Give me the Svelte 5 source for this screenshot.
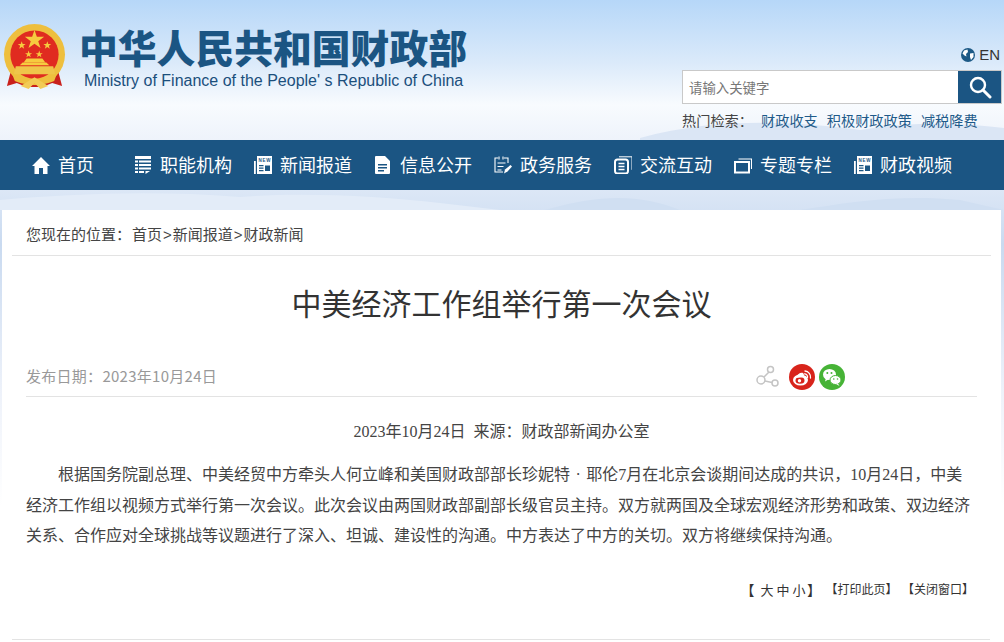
<script>
  const nav = [
    { label: '职能机构', icon: 'list' },
    { label: '新闻报道', icon: 'news' },
    { label: '信息公开', icon: 'doc' },
    { label: '政务服务', icon: 'pen' },
    { label: '交流互动', icon: 'talk' },
    { label: '专题专栏', icon: 'win' },
    { label: '财政视频', icon: 'news' }
  ];
</script>

<div class="page">
  <svg class="sky" viewBox="0 0 1004 642" preserveAspectRatio="none" aria-hidden="true">
    <defs>
      <linearGradient id="skyg" x1="0" y1="0" x2="0" y2="1">
        <stop offset="0" stop-color="#b6d7f8" />
        <stop offset="0.45" stop-color="#dbeafa" />
        <stop offset="0.75" stop-color="#f8fbfe" />
        <stop offset="1" stop-color="#eef3fb" />
      </linearGradient>
      <linearGradient id="lowg" x1="0" y1="0" x2="0" y2="1">
        <stop offset="0" stop-color="#dce7f6" />
        <stop offset="0.12" stop-color="#c9daf0" />
        <stop offset="0.45" stop-color="#eef2fa" />
        <stop offset="0.7" stop-color="#ffffff" />
      </linearGradient>
    </defs>
    <rect width="1004" height="140" fill="url(#skyg)" />
    <rect y="190" width="1004" height="452" fill="url(#lowg)" />
    <path d="M0 200 C70 194 150 190 240 197 C300 192 380 196 440 203 L500 210 L0 210Z" fill="#e3ecf8" />
    <path d="M545 210 C600 194 640 194 680 210Z" fill="#d0dff2" />
    <path d="M800 210 C850 202 900 194 960 200 L1004 210Z" fill="#d0dff2" />
    <path d="M640 138 C720 116 800 122 860 130 C920 120 970 124 1004 128 L1004 140 L640 140Z" fill="#dbe6f5" />
  </svg>

  <header class="top">
    <div class="brand">
      <svg class="emblem" viewBox="0 0 64 66" aria-hidden="true">
        <path d="M9 44 L4 63 L14 60 L24 64 L40 64 L50 60 L60 63 L55 44Z" fill="#c9211c" />
        <circle cx="32" cy="31" r="31" fill="#eebf3e" />
        <circle cx="32" cy="31" r="24.5" fill="#e02b20" />
        <path d="M32 6 l2.4 7 7.4 0 -6 4.4 2.3 7 -6.1 -4.3 -6.1 4.3 2.3 -7 -6 -4.4 7.4 0Z" fill="#f6cb3f" />
        <g fill="#f6cb3f">
          <path d="M19 17.5l1 2.9 3 0-2.4 1.8 .9 2.9-2.5-1.8-2.5 1.8 .9-2.9-2.4-1.8 3 0Z" />
          <path d="M45 17.5l1 2.9 3 0-2.4 1.8 .9 2.9-2.5-1.8-2.5 1.8 .9-2.9-2.4-1.8 3 0Z" />
          <path d="M26 27l.9 2.6 2.7 0-2.2 1.6 .8 2.6-2.2-1.6-2.2 1.6 .8-2.6-2.2-1.6 2.7 0Z" />
          <path d="M36.800 27l.9 2.6 2.7 0-2.2 1.6 .8 2.6-2.2-1.6-2.2 1.6 .8-2.6-2.2-1.6 2.7 0Z" />
          <path d="M20 39h24l3 3H17Z" />
          <path d="M13 43h38l2 8H11Z" fill="#efc54a" />
          <path d="M24 35h16l3 4H21Z" />
        </g>
        <path d="M9 50 C20 58 44 58 55 50 L52 58 C42 63 22 63 12 58Z" fill="#eebf3e" />
        <path d="M18 63 L32 54 L46 63 L38 66 L32 60 L26 66Z" fill="#f2cb55" />
      </svg>
      <div class="names">
        <div class="cn">中华人民共和国财政部</div>
        <div class="en">Ministry of Finance of the People' s Republic of China</div>
      </div>
    </div>

    <div class="tools">
      <div class="lang">
        <svg class="globe" viewBox="0 0 14 14" aria-hidden="true">
          <circle cx="7" cy="7" r="7" fill="#1d5a86" />
          <path d="M3 2.500 L6.500 1.500 L7 4 L5 6 L5.500 8.500 L3.500 7.500 L1.500 5.500Z M9 5.500 L12.500 5 L12.500 9 L10 12 L9 9Z" fill="#fff" />
        </svg>
        <span>EN</span>
      </div>
      <div class="search">
        <span class="ph">请输入关键字</span>
        <span class="btn">
          <svg viewBox="0 0 24 24" width="24" height="24" aria-hidden="true">
            <circle cx="10" cy="10" r="7" fill="none" stroke="#fff" stroke-width="2.400" />
            <path d="M15 15 L22 22" stroke="#fff" stroke-width="3" stroke-linecap="round" />
          </svg>
        </span>
      </div>
      <div class="hot">
        <span class="hot-label">热门检索：</span>
        <span class="k1">财政收支</span>
        <span class="k2">积极财政政策</span>
        <span class="k3">减税降费</span>
      </div>
    </div>
  </header>

  <nav class="nav">
    <a class="item home">
      <svg viewBox="0 0 18 18" aria-hidden="true"><path d="M9 1 L18 10 H15.500 V18 H11 V12 H7 V18 H2.500 V10 H0Z" fill="#fff" /></svg>
      <span>首页</span>
    </a>
    {#each nav as n}
      <a class="item">
        <svg viewBox="0 0 18 18" aria-hidden="true">
          {#if n.icon === 'list'}
            <path d="M1 0h16v3H1Z M1 4.500h3v2H1Z M5 4.500h12v2H5Z M1 8h3v2H1Z M5 8h12v2H5Z M1 11.500h3v2H1Z M5 11.500h12v2H5Z M1 15h3v2H1Z M5 15h5v2H5Z M11.500 15H16l-4.500 3Z" fill="#fff" />
          {:else if n.icon === 'news'}
            <path fill-rule="evenodd" d="M3 0h15v18H3Z M11 9.500V15h5V9.500Z M5 9v1.300h4.500V9Z M5 11.500v1.300h4.500V11.500Z M5 14v1.300h4.500V14Z" fill="#fff" />
            <text class="new" x="4.500" y="6" textLength="12">NEW</text>
            <path d="M0 5h1.800v13H0Z" fill="#fff" />
          {:else if n.icon === 'doc'}
            <path fill-rule="evenodd" d="M2 0h9l5 5v12a1 1 0 0 1-1 1H2a1 1 0 0 1-1-1V1a1 1 0 0 1 1-1Z M4 8v1.500h9V8Z M4 11v1.500h9V11Z M4 14v1.500h6V14Z" fill="#fff" />
          {:else if n.icon === 'pen'}
            <g fill="none" stroke="#fff" stroke-width="1.100">
              <path d="M4 2H1v14h8 M10 2h4v5" />
              <path d="M5 .5v3 M9 .5v3 M3.500 7h8 M3.500 10.500h6 M3.500 14h4" />
            </g>
            <path d="M10 17.500 L11 13.500 L16.500 9 L18 10.500 L13.500 15.500Z" fill="#fff" />
          {:else if n.icon === 'talk'}
            <g fill="none" stroke="#fff">
              <path d="M5 .8h13v13" stroke-width="1" />
              <rect x="1" y="3.500" width="13" height="14" rx="2.500" stroke-width="2" />
              <path d="M4.500 7.500h6 M4.500 10.500h6 M4.500 13.500h6" stroke-width="1.300" />
            </g>
          {:else}
            <g fill="none" stroke="#fff">
              <rect x="1" y="6" width="14" height="10.500" stroke-width="2" />
              <path d="M4.500 3h13v10" stroke-width="1.100" />
            </g>
          {/if}
        </svg>
        <span>{n.label}</span>
      </a>
    {/each}
  </nav>

  <main class="card">
    <div class="crumb">
      <span class="here">您现在的位置：</span><span class="path">首页</span><span class="sep">&gt;</span><span>新闻报道</span><span class="sep">&gt;</span><span>财政新闻</span>
    </div>
    <div class="article">
      <h1>中美经济工作组举行第一次会议</h1>
      <div class="meta">
        <span class="date">发布日期：2023年10月24日</span>
        <div class="share">
          <svg class="s-share" viewBox="0 0 24 24" aria-hidden="true">
            <g fill="none" stroke="#c4c4c4" stroke-width="1.500">
              <circle cx="14.500" cy="4.500" r="3" />
              <circle cx="5" cy="15" r="4" />
              <circle cx="19" cy="18" r="3" />
              <path d="M13 7 L8 12 M9 16 L16 17.500" />
            </g>
          </svg>
          <span class="round weibo">
            <svg viewBox="0 0 26 26" aria-hidden="true">
              <ellipse cx="11.500" cy="16" rx="7.500" ry="5.500" fill="#fff" />
              <ellipse cx="11" cy="16.500" rx="4.500" ry="3.300" fill="#d8241b" />
              <circle cx="10.500" cy="16.800" r="1.700" fill="#fff" />
              <path d="M16 7 a6 6 0 0 1 5.500 7 M15.500 9.800 a3 3 0 0 1 3 3.500" fill="none" stroke="#fff" stroke-width="1.300" stroke-linecap="round" />
              <path d="M6 14 C8 10 12 8 14 9 C15.500 10 15 12 14 13Z" fill="#fff" />
            </svg>
          </span>
          <span class="round wechat">
            <svg viewBox="0 0 26 26" aria-hidden="true">
              <ellipse cx="10.500" cy="10.500" rx="6.500" ry="5.500" fill="#fff" />
              <path d="M7 14 L6 17.500 L10 15Z" fill="#fff" />
              <ellipse cx="16.500" cy="16" rx="5.500" ry="4.500" fill="#fff" stroke="#46b336" stroke-width="1" />
              <path d="M19 19.500 L20.500 22 L17 20Z" fill="#fff" />
              <circle cx="8.300" cy="9" r="1" fill="#46b336" />
              <circle cx="12.500" cy="9" r="1" fill="#46b336" />
              <circle cx="14.800" cy="15" r=".8" fill="#46b336" />
              <circle cx="18.500" cy="15" r=".8" fill="#46b336" />
            </svg>
          </span>
        </div>
      </div>
      <div class="source">2023年10月24日&nbsp;&nbsp;来源：财政部新闻办公室</div>
      <p>根据国务院副总理、中美经贸中方牵头人何立峰和美国财政部部长珍妮特 · 耶伦7月在北京会谈期间达成的共识，10月24日，中美经济工作组以视频方式举行第一次会议。此次会议由两国财政部副部长级官员主持。双方就两国及全球宏观经济形势和政策、双边经济关系、合作应对全球挑战等议题进行了深入、坦诚、建设性的沟通。中方表达了中方的关切。双方将继续保持沟通。</p>
      <div class="actions">
        <span class="size"><b class="open">【</b><i>大</i><i>中</i><i>小</i><b>】</b></span>
        <span class="act">【打印此页】</span>
        <span class="act">【关闭窗口】</span>
      </div>
    </div>
    <div class="foot-line"></div>
  </main>
</div>

<style>
  :global(body) {
    margin: 0;
    background: #fff;
    font-family: "Noto Sans CJK SC", "Liberation Sans", sans-serif;
  }
  .page {
    position: relative;
    width: 1004px;
    height: 642px;
    overflow: hidden;
  }
  .sky {
    position: absolute;
    inset: 0;
    width: 100%;
    height: 100%;
  }
  .top {
    position: relative;
    height: 140px;
    display: flex;
    justify-content: space-between;
  }
  .brand {
    display: flex;
    align-items: flex-start;
    padding: 23px 0 0 3px;
    gap: 13px;
  }
  .emblem {
    width: 63px;
    height: 67px;
  }
  .names {
    display: flex;
    flex-direction: column;
  }
  .cn {
    font-size: 38.800px;
    font-weight: 900;
    color: #1b5583;
    line-height: 40px;
    white-space: nowrap;
    margin-top: 3px;
  }
  .en {
    font-family: "Liberation Sans", sans-serif;
    font-size: 16px;
    color: #1b4f7c;
    line-height: 18px;
    margin: 6px 0 0 5px;
    white-space: nowrap;
  }
  .tools {
    width: 322px;
    padding-top: 44px;
    display: flex;
    flex-direction: column;
  }
  .lang {
    display: flex;
    justify-content: flex-end;
    align-items: center;
    gap: 4px;
    height: 20px;
    padding-right: 4px;
    font-family: "Liberation Sans", sans-serif;
    font-size: 15px;
    color: #333;
  }
  .globe {
    width: 14px;
    height: 14px;
    margin-top: 2px;
  }
  .search {
    margin-top: 6px;
    width: 320px;
    height: 34px;
    display: flex;
    background: #fff;
    border: 1px solid #c9c9c9;
    box-sizing: border-box;
    align-items: stretch;
  }
  .ph {
    flex: 1;
    padding-left: 6px;
    font-size: 13.400px;
    line-height: 32px;
    color: #777;
  }
  .btn {
    width: 43px;
    background: #1b5583;
    display: flex;
    align-items: center;
    justify-content: center;
  }
  .hot {
    margin-top: 6px;
    font-size: 14.200px;
    line-height: 20px;
    color: #444;
    display: flex;
    white-space: nowrap;
  }
  .hot-label { width: 79px; }
  .k1, .k2, .k3 { color: #1f5b8a; }
  .k2, .k3 { margin-left: 9px; }
  .nav {
    position: relative;
    height: 50px;
    background: #1b5583;
    display: flex;
    padding-left: 32px;
    box-sizing: border-box;
  }
  .item {
    width: 120px;
    display: flex;
    align-items: center;
    gap: 8px;
    color: #fff;
    font-size: 18px;
    white-space: nowrap;
  }
  .item span {
    margin-top: -2px;
  }
  .item.home {
    width: 102px;
  }
  .item svg {
    width: 18px;
    height: 18px;
    flex: none;
  }
  .new {
    font-family: "Liberation Sans", sans-serif;
    font-size: 4.500px;
    font-weight: 700;
    fill: #1b5583;
  }
  .card {
    position: relative;
    margin: 20px 3px 0 2px;
    height: 432px;
    background: #fff;
    display: flex;
    flex-direction: column;
  }
  .crumb {
    margin: 0 10px;
    padding-left: 14px;
    height: 46px;
    line-height: 48px;
    box-sizing: border-box;
    border-bottom: 1px solid #e3e3e3;
    font-size: 15px;
    color: #444;
  }
  .path { margin-left: 1px; }
  .sep { margin: 0 1px; font-family: "Liberation Sans", sans-serif; }
  .article {
    margin: 0 24px;
    flex: 1;
  }
  h1 {
    margin: 26px 0 0;
    font-size: 30px;
    line-height: 40px;
    font-weight: 400;
    color: #333;
    text-align: center;
  }
  .meta {
    margin-top: 35px;
    height: 40px;
    display: flex;
    align-items: center;
    justify-content: space-between;
    border-bottom: 1px solid #e3e3e3;
    box-sizing: border-box;
  }
  .date {
    font-size: 15px;
    color: #999;
    letter-spacing: .28px;
    padding-bottom: 2px;
  }
  .share {
    display: flex;
    align-items: center;
    gap: 4px;
    margin-right: 132px;
  }
  .s-share {
    width: 24px;
    height: 24px;
    margin-right: 5px;
  }
  .round {
    width: 26px;
    height: 26px;
    border-radius: 50%;
    display: block;
  }
  .round svg {
    display: block;
    width: 26px;
    height: 26px;
  }
  .weibo { background: #d8241b; }
  .wechat { background: #46b336; }
  .source {
    margin-top: 23px;
    line-height: 24px;
    font-size: 16px;
    font-family: "Liberation Serif", "Noto Sans CJK SC", serif;
    color: #444;
    text-align: center;
  }
  p {
    margin: 16px 0 0;
    font-family: "Liberation Serif", "Noto Sans CJK SC", serif;
    font-size: 16px;
    line-height: 30.500px;
    text-indent: 32px;
    word-spacing: 1.500px;
    color: #444;
  }
  .actions {
    margin-top: 27px;
    display: flex;
    justify-content: flex-end;
    align-items: center;
    gap: 4.500px;
    font-size: 12px;
    color: #333;
    line-height: 20px;
    padding-right: 3px;
  }
  .size b { font-weight: 400; font-size: 14px; }
  .size .open { margin-right: 4.500px; }
  .size i { font-style: normal; font-size: 13px; margin: 0 1.500px; }
  .foot-line {
    position: absolute;
    left: 10px;
    right: 11px;
    bottom: 2px;
    border-top: 1px solid #e3e3e3;
  }
</style>
